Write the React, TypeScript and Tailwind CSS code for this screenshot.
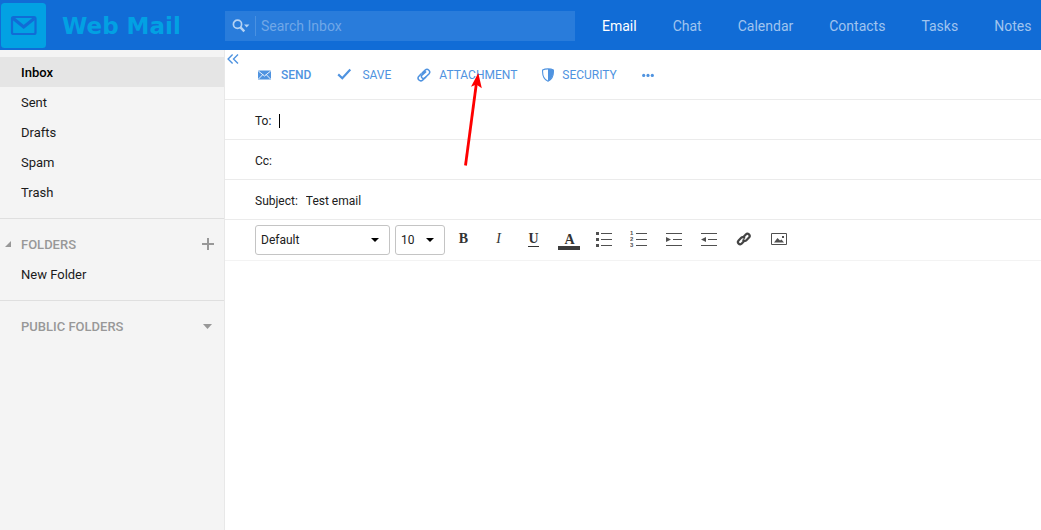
import type { ReactNode } from "react";

const mailFolders = ["Inbox", "Sent", "Drafts", "Spam", "Trash"];
const sections = ["Email", "Chat", "Calendar", "Contacts", "Tasks", "Notes"];

function Logo() {
  return (
    <svg width="45" height="45" viewBox="0 0 45 45" aria-hidden="true" className="shrink-0">
      <rect width="45" height="45" rx="3.5" fill="#02a1e3" />
      <rect x="11" y="14" width="23.5" height="17" rx="1.5" fill="none" stroke="#116cd6" strokeWidth="2.2" />
      <path d="M12 15.2 L22.7 24 L33.5 15.2" fill="none" stroke="#116cd6" strokeWidth="3.2" />
    </svg>
  );
}

function Header() {
  return (
    <header className="flex h-[50px] items-center bg-[#116cd6]">
      <div className="flex w-[225px] shrink-0 items-center gap-4 pt-px pl-px">
        <Logo />
        <span className="pt-0.5 font-['DejaVu_Sans',sans-serif] text-[23px] font-bold whitespace-nowrap text-[#02a1e3]">Web Mail</span>
      </div>
      <div className="mt-0.5 flex h-[30px] w-[350px] shrink-0 items-center bg-[#297cdb]">
        <button type="button" aria-label="Search options" className="flex h-5 w-[31px] items-center border-r border-[#4a91e1] pl-[7px]">
          <svg width="18" height="14" viewBox="0 0 18 14" fill="none" aria-hidden="true">
            <circle cx="5.5" cy="5.2" r="4.1" stroke="#b4d2f4" strokeWidth="1.7" />
            <path d="M8.3 8.2 L12.3 12.3" stroke="#b4d2f4" strokeWidth="2.4" />
            <path d="M12 5.6 h5.4 l-2.7 2.8z" fill="#b4d2f4" />
          </svg>
        </button>
        <input
          type="search"
          aria-label="Search Inbox"
          placeholder="Search Inbox"
          className="h-full min-w-0 flex-1 bg-transparent pl-[5px] text-sm text-white outline-none placeholder:text-[#70a7e7]"
        />
      </div>
      <nav className="ml-[27px] flex items-center gap-9 pt-0.5 text-sm text-[#a0c4ef]">
        {sections.map((s, i) => (
          <a key={s} href={`#${s.toLowerCase()}`} className={i === 0 ? "text-white" : ""}>
            {s}
          </a>
        ))}
      </nav>
    </header>
  );
}

function Sidebar() {
  return (
    <aside className="w-[225px] shrink-0 border-r border-[#e8e8e8] bg-[#f4f4f4] pt-[7px] text-[13px] text-[#1b1b1b]">
      <nav className="flex flex-col pb-[11px]">
        {mailFolders.map((f, i) => (
          <a
            key={f}
            href={`#${f.toLowerCase()}`}
            className={`flex h-[30px] items-center pt-0.5 pl-[21px] ${i === 0 ? "bg-[#e5e5e5] font-medium text-black" : ""}`}
          >
            {f}
          </a>
        ))}
      </nav>
      <section className="border-t border-[#dfdfdf] pt-2.5 pb-[11px]">
        <div className="flex h-[30px] items-center pr-2.5 pl-[5px] text-[#989898]">
          <svg width="6" height="6" viewBox="0 0 6 6" aria-hidden="true" className="mr-2.5">
            <path d="M6 0 V6 H0z" fill="#989898" />
          </svg>
          <h2 className="flex-1 pt-0.5 font-medium">FOLDERS</h2>
          <button type="button" aria-label="New folder">
            <svg width="12" height="12" viewBox="0 0 12 12" aria-hidden="true">
              <path d="M6 0 V12 M0 6 H12" stroke="#989898" strokeWidth="2" />
            </svg>
          </button>
        </div>
        <a href="#new-folder" className="flex h-[30px] items-center pt-0.5 pl-[21px]">
          New Folder
        </a>
      </section>
      <section className="border-t border-[#dfdfdf] pt-2.5">
        <div className="flex h-[30px] items-center pr-3 pl-[21px] text-[#989898]">
          <h2 className="flex-1 pt-0.5 font-medium">PUBLIC FOLDERS</h2>
          <button type="button" aria-label="Expand public folders">
            <svg width="9" height="5" viewBox="0 0 9 5" aria-hidden="true">
              <path d="M0 0 H9 L4.5 5z" fill="#989898" />
            </svg>
          </button>
        </div>
      </section>
    </aside>
  );
}

function Clip() {
  return (
    <svg width="15" height="14" viewBox="-1 0 15 14" fill="none" stroke="currentColor" strokeWidth="1.5" strokeLinecap="round" aria-hidden="true">
      <path d="M5.3 4.9 L8.2 2.1 a2.7 2.7 0 0 1 3.9 3.7 L8 9.8 a2 2 0 0 1 -3 -2.7 L8.7 3.9" />
      <path d="M8.6 9.3 L5.6 12.1 a2.7 2.7 0 0 1 -3.9 -3.7 L4.2 5.9" />
    </svg>
  );
}

function Link() {
  return (
    <svg width="16" height="16" viewBox="0 0 16 16" fill="none" stroke="#444" strokeWidth="2.2" strokeLinecap="round" aria-hidden="true">
      <path d="M7.2 6.2 L9.8 3.4 a2.2 2.2 0 0 1 3.2 3.1 L10.4 9.2 a2.1 2.1 0 0 1 -3 0" />
      <path d="M8.4 9.8 L5.8 12.6 a2.2 2.2 0 0 1 -3.2 -3.1 L5.2 6.8 a2.1 2.1 0 0 1 3 0" />
    </svg>
  );
}

function Action({ icon, label, bold = false }: { icon: ReactNode; label: string; bold?: boolean }) {
  return (
    <button type="button" className={`flex items-center gap-2 ${bold ? "font-medium" : ""}`}>
      {icon}
      {label}
    </button>
  );
}

function ActionBar() {
  return (
    <div className="relative flex h-[50px] items-center gap-[25px] border-b border-[#ebebeb] pl-8 text-xs text-[#4f93e0]">
      <button type="button" aria-label="Collapse sidebar" className="absolute top-1 left-0.5">
        <svg width="12" height="10" viewBox="0 0 12 10" fill="none" stroke="#4f93e0" strokeWidth="1.4" aria-hidden="true">
          <path d="M5.6 0.5 L1.1 5 L5.6 9.5 M11 0.5 L6.5 5 L11 9.5" />
        </svg>
      </button>
      <Action
        bold
        label="SEND"
        icon={
          <svg width="16" height="16" viewBox="0 0 16 16" aria-hidden="true">
            <rect x="1" y="3.5" width="13" height="9" rx="0.5" fill="currentColor" />
            <path d="M1.3 4 L7.5 9 L13.7 4 M1.5 12 L5.7 7.7 M13.5 12 L9.3 7.7" fill="none" stroke="#fff" strokeWidth="0.9" />
          </svg>
        }
      />
      <Action
        label="SAVE"
        icon={
          <svg width="18" height="16" viewBox="0 0 18 16" fill="none" stroke="currentColor" strokeWidth="2.2" aria-hidden="true">
            <path d="M2.2 7.4 L6.3 11.2 L14.3 2.6" />
          </svg>
        }
      />
      <Action label="ATTACHMENT" icon={<Clip />} />
      <Action
        label="SECURITY"
        icon={
          <svg width="12" height="14" viewBox="0 0 12 14" aria-hidden="true">
            <path d="M6 0.9 C8 0.9 10 1.3 11.4 2.1 C11.7 7.1 10 11.4 6 13.2 C2 11.4 0.3 7.1 0.6 2.1 C2 1.3 4 0.9 6 0.9z" fill="none" stroke="currentColor" strokeWidth="1.1" />
            <path d="M6 0.9 C8 0.9 10 1.3 11.4 2.1 C11.7 7.1 10 11.4 6 13.2z" fill="currentColor" />
          </svg>
        }
      />
      <button type="button" aria-label="More actions">
        <svg width="12" height="4" viewBox="0 0 12 4" fill="currentColor" aria-hidden="true">
          <circle cx="1.7" cy="2.4" r="1.6" />
          <circle cx="6" cy="2.4" r="1.6" />
          <circle cx="10.3" cy="2.4" r="1.6" />
        </svg>
      </button>
      <svg width="24" height="96" viewBox="0 0 24 96" aria-hidden="true" className="pointer-events-none absolute top-[22px] left-[235px] z-10">
        <path d="M5.5 93.5 L16.3 12" stroke="#fe0000" strokeWidth="2.8" />
        <path d="M18.3 1 L21.8 16.2 L16.4 12.4 L11 14.8z" fill="#fe0000" />
      </svg>
    </div>
  );
}

function Field({ id, label, value = "", active = false }: { id: string; label: string; value?: string; active?: boolean }) {
  return (
    <div className="flex h-10 items-center border-b border-[#ebebeb] pt-0.5 pr-4 pl-[30px] text-xs text-[#202020]">
      <label htmlFor={id}>{label}</label>
      {active && <span className="ml-2 h-3.5 w-px bg-black" />}
      <input id={id} defaultValue={value} className={`min-w-0 flex-1 bg-transparent outline-none ${active ? "" : "ml-2"}`} />
    </div>
  );
}

function Picker({ label, value, wide = false }: { label: string; value: string; wide?: boolean }) {
  return (
    <div className={`relative h-[30px] ${wide ? "w-[135px]" : "w-[50px]"}`}>
      <select
        aria-label={label}
        defaultValue={value}
        className="h-full w-full appearance-none rounded-[3px] border border-[#c4c4c4] bg-white pl-[5px] text-xs text-[#202020]"
      >
        <option>{value}</option>
      </select>
      <svg width="8" height="4" viewBox="0 0 8 4" aria-hidden="true" className="pointer-events-none absolute top-[13px] right-[11px]">
        <path d="M0 0 H8 L4 4z" fill="#000" />
      </svg>
    </div>
  );
}

function Tool({ label, children }: { label: string; children: ReactNode }) {
  return (
    <button type="button" aria-label={label} className="flex h-[30px] w-[35px] items-center justify-center font-['Liberation_Serif',serif] text-sm">
      {children}
    </button>
  );
}

function Lines({ children }: { children: ReactNode }) {
  return (
    <svg width="18" height="18" viewBox="0 0 18 18" fill="#505050" aria-hidden="true">
      {children}
    </svg>
  );
}

function FormatBar() {
  return (
    <div className="flex h-[41px] items-center border-b border-[#f3f3f3] pl-[30px] text-[#333]">
      <Picker label="Font" value="Default" wide />
      <div className="ml-[5px]">
        <Picker label="Font size" value="10" />
      </div>
      <div className="ml-px flex pb-0.5">
        <Tool label="Bold"><b>B</b></Tool>
        <Tool label="Italic"><i>I</i></Tool>
        <Tool label="Underline">
          <b className="border-b border-[#333] leading-3.5">U</b>
        </Tool>
        <Tool label="Text colour">
          <b className="mt-1 w-[22px] shrink-0 border-b-4 border-[#3c3c3c] pt-0.5 pl-0.5 text-center leading-3">A</b>
        </Tool>
        <Tool label="Bulleted list">
          <Lines>
            <path d="M1 2h3v3H1z M1 8h3v3H1z M1 14h3v3H1z M6 3h11v1H6z M6 9h11v1H6z M6 15h11v1H6z" />
          </Lines>
        </Tool>
        <Tool label="Numbered list">
          <Lines>
            <path d="M6 3h11v1H6z M6 9h11v1H6z M6 15h11v1H6z" />
            <g className="font-['Liberation_Sans',sans-serif] text-[6px] font-bold">
              <text x="0" y="5">1</text>
              <text x="0" y="11">2</text>
              <text x="0" y="17">3</text>
            </g>
          </Lines>
        </Tool>
        <Tool label="Increase indent">
          <Lines>
            <path d="M1 3h16v1H1z M8 9h9v1H8z M1 15h16v1H1z M1 7l5 2.5L1 12z" />
          </Lines>
        </Tool>
        <Tool label="Decrease indent">
          <Lines>
            <path d="M1 3h16v1H1z M8 9h9v1H8z M1 15h16v1H1z M6 7v5L1 9.5z" />
          </Lines>
        </Tool>
        <Tool label="Insert link"><Link /></Tool>
        <Tool label="Insert image">
          <Lines>
            <path d="M1.5 3.5h15v11h-15z" fill="none" stroke="#505050" />
            <path d="M4 12.5l3.5-4.5 2.5 2.5 1.5-1 2.5 3z M12 6h2v2h-2z" />
          </Lines>
        </Tool>
      </div>
    </div>
  );
}

export default function App() {
  return (
    <div className="flex min-h-screen flex-col overflow-hidden bg-white font-[Roboto,sans-serif]">
      <Header />
      <div className="flex flex-1">
        <Sidebar />
        <main className="flex min-w-0 flex-1 flex-col">
          <ActionBar />
          <Field id="to" label="To:" active />
          <Field id="cc" label="Cc:" />
          <Field id="subject" label="Subject:" value="Test email" />
          <FormatBar />
          <textarea aria-label="Message" className="w-full flex-1 resize-none p-4 text-xs outline-none" />
        </main>
      </div>
    </div>
  );
}
